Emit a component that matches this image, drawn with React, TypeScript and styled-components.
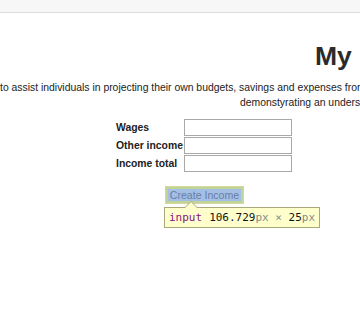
import React from 'react';
import styled, { createGlobalStyle } from 'styled-components';

const GlobalStyle = createGlobalStyle`
    html {
        overflow: hidden;
    }
    body {
        margin: 0;
        padding: 0;
        background: #fff;
        font-family: 'Liberation Sans', Arial, sans-serif;
        color: #222;
    }
`;

const TopBar = styled.div`
    height: 12px;
    background-color: #f7f7f7;
    border-bottom: 1px solid #dcdcdc;
`;

const Main = styled.div`
    width: 360px;
    min-height: 311px;
    padding-top: 28px;
    box-sizing: border-box;
    overflow-x: clip;
`;

const Title = styled.h1`
    margin: 0;
    padding-left: 315px;
    font-size: 26.5px;
    line-height: 30px;
    font-weight: bold;
    color: #2b2b2b;
    white-space: nowrap;
`;

const Intro = styled.div`
    margin-top: 9px;
    font-size: 10.4px;
    line-height: 15px;
    color: #222;
    white-space: nowrap;
`;

const IntroLine = styled.div<{ $indent: number }>`
    padding-left: ${props => props.$indent}px;
`;

const FormTable = styled.table`
    margin: 8px 0 0 115px;
    border-collapse: separate;
    border-spacing: 1px;
    td {
        padding: 0;
        height: 17px;
    }
`;

const Label = styled.td`
    font-size: 10.4px;
    font-weight: bold;
    color: #222;
    padding-right: 1px;
    white-space: nowrap;
`;

const Field = styled.input`
    display: block;
    box-sizing: border-box;
    width: 108px;
    height: 17px;
    margin: 0;
    border: 1px solid #a9a9a9;
    background: #fff;
`;

const ButtonArea = styled.div`
    position: relative;
    margin: 13px 0 0 165px;
    width: 79px;
`;

const CreateButton = styled.button`
    display: block;
    box-sizing: border-box;
    width: 79px;
    height: 18px;
    padding: 0;
    border: 1px solid #d3d89c;
    box-shadow: inset 0 0 0 2px #bfd496;
    background-color: #a3bfe6;
    font-family: 'Liberation Sans', Arial, sans-serif;
    font-size: 10.6px;
    color: #6a7ea3;
`;

const Tooltip = styled.div`
    position: absolute;
    top: 21px;
    left: -1px;
    box-sizing: border-box;
    height: 21px;
    padding: 0 4px;
    display: flex;
    align-items: center;
    background-color: #ffffcc;
    border: 1px solid #a8a87a;
    font-family: 'DejaVu Sans Mono', 'Liberation Mono', monospace;
    font-size: 11px;
    color: #111;
    white-space: nowrap;
    &::before, &::after {
        content: '';
        position: absolute;
        border-style: solid;
        border-color: transparent;
    }
    &::before {
        top: -7px;
        left: 19px;
        border-width: 0 7px 7px 7px;
        border-bottom-color: #a8a87a;
    }
    &::after {
        top: -6px;
        left: 20px;
        border-width: 0 6px 6px 6px;
        border-bottom-color: #ffffcc;
    }
`;

const Tag = styled.span`
    color: #881280;
    margin-right: 7px;
`;

const Unit = styled.span`
    color: #888;
`;

const rows = ['Wages', 'Other income', 'Income total'];

const App: React.FC = () => {
    return (
        <>
            <GlobalStyle />
            <TopBar />
            <Main>
                <Title>My Budget</Title>
                <Intro>
                    <IntroLine $indent={0}>
                        to assist individuals in projecting their own budgets, savings and expenses from
                    </IntroLine>
                    <IntroLine $indent={240}>demonstyrating an understanding</IntroLine>
                </Intro>
                <FormTable>
                    <tbody>
                        {rows.map(row => (
                            <tr key={row}>
                                <Label>{row}</Label>
                                <td><Field type="text" /></td>
                            </tr>
                        ))}
                    </tbody>
                </FormTable>
                <ButtonArea>
                    <CreateButton>Create Income</CreateButton>
                    <Tooltip>
                        <Tag>input</Tag>
                        106.729<Unit>px</Unit>&nbsp;<Unit>×</Unit>&nbsp;25<Unit>px</Unit>
                    </Tooltip>
                </ButtonArea>
            </Main>
        </>
    );
};

export default App;
